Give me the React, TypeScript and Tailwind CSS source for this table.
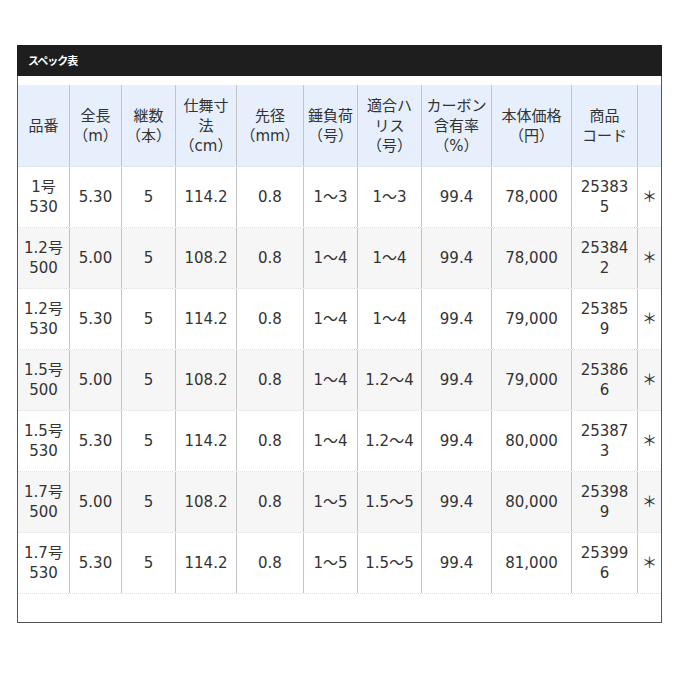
import React from "react";

const cols = "grid-cols-[52px_52px_54px_61px_67px_54px_64px_70px_80px_66px_23px]";

const headers: string[][] = [
  ["品番"],
  ["全長", "（m）"],
  ["継数", "（本）"],
  ["仕舞寸", "法", "（cm）"],
  ["先径", "（mm）"],
  ["錘負荷", "（号）"],
  ["適合ハ", "リス", "（号）"],
  ["カーボン", "含有率", "（%）"],
  ["本体価格", "（円）"],
  ["商品", "コード"],
  [""],
];

const rows: string[][][] = [
  [["1号", "530"], ["5.30"], ["5"], ["114.2"], ["0.8"], ["1～3"], ["1～3"], ["99.4"], ["78,000"], ["25383", "5"], ["＊"]],
  [["1.2号", "500"], ["5.00"], ["5"], ["108.2"], ["0.8"], ["1～4"], ["1～4"], ["99.4"], ["78,000"], ["25384", "2"], ["＊"]],
  [["1.2号", "530"], ["5.30"], ["5"], ["114.2"], ["0.8"], ["1～4"], ["1～4"], ["99.4"], ["79,000"], ["25385", "9"], ["＊"]],
  [["1.5号", "500"], ["5.00"], ["5"], ["108.2"], ["0.8"], ["1～4"], ["1.2～4"], ["99.4"], ["79,000"], ["25386", "6"], ["＊"]],
  [["1.5号", "530"], ["5.30"], ["5"], ["114.2"], ["0.8"], ["1～4"], ["1.2～4"], ["99.4"], ["80,000"], ["25387", "3"], ["＊"]],
  [["1.7号", "500"], ["5.00"], ["5"], ["108.2"], ["0.8"], ["1～5"], ["1.5～5"], ["99.4"], ["80,000"], ["25398", "9"], ["＊"]],
  [["1.7号", "530"], ["5.30"], ["5"], ["114.2"], ["0.8"], ["1～5"], ["1.5～5"], ["99.4"], ["81,000"], ["25399", "6"], ["＊"]],
];

function Cell({ lines, last }: { lines: string[]; last: boolean }) {
  return (
    <div
      className={
        "flex flex-col items-center justify-center text-center leading-[20px] " +
        (last ? "" : "border-r border-[#c4c4c4]")
      }
    >
      {lines.map((l, i) => (
        <span key={i} className="whitespace-nowrap">
          {l}
        </span>
      ))}
    </div>
  );
}

export default function App() {
  return (
    <div
      className="w-[680px] h-[680px] bg-white pt-[45px] pl-[17px]"
      style={{ fontFamily: '"DejaVu Sans", "Noto Sans CJK JP", sans-serif' }}
    >
      <div className="w-[645px] h-[578px] border border-t-0 border-[#555] bg-white">
        <div className="h-[31px] bg-[#1e1e1e] flex items-center pl-[11px] -mx-px">
          <span
            className="text-white text-[11px] font-bold tracking-[-1px]"
            style={{ fontFamily: '"Noto Sans CJK JP", sans-serif' }}
          >
            スペック表
          </span>
        </div>
        <div className="h-[9px]" />
        <div className="text-[15px] text-[#333]">
          <div className={"grid h-[82px] bg-[#e6effb] border-b border-[#dde6f0] " + cols}>
            {headers.map((h, i) => (
              <Cell key={i} lines={h} last={i === headers.length - 1} />
            ))}
          </div>
          {rows.map((r, ri) => (
            <div
              key={ri}
              className={
                "grid h-[61px] border-b border-dotted border-[#e2e2e2] " +
                cols +
                " " +
                (ri % 2 === 1 ? "bg-[#f6f6f6]" : "bg-white")
              }
            >
              {r.map((c, ci) => (
                <Cell key={ci} lines={c} last={ci === r.length - 1} />
              ))}
            </div>
          ))}
        </div>
      </div>
    </div>
  );
}
